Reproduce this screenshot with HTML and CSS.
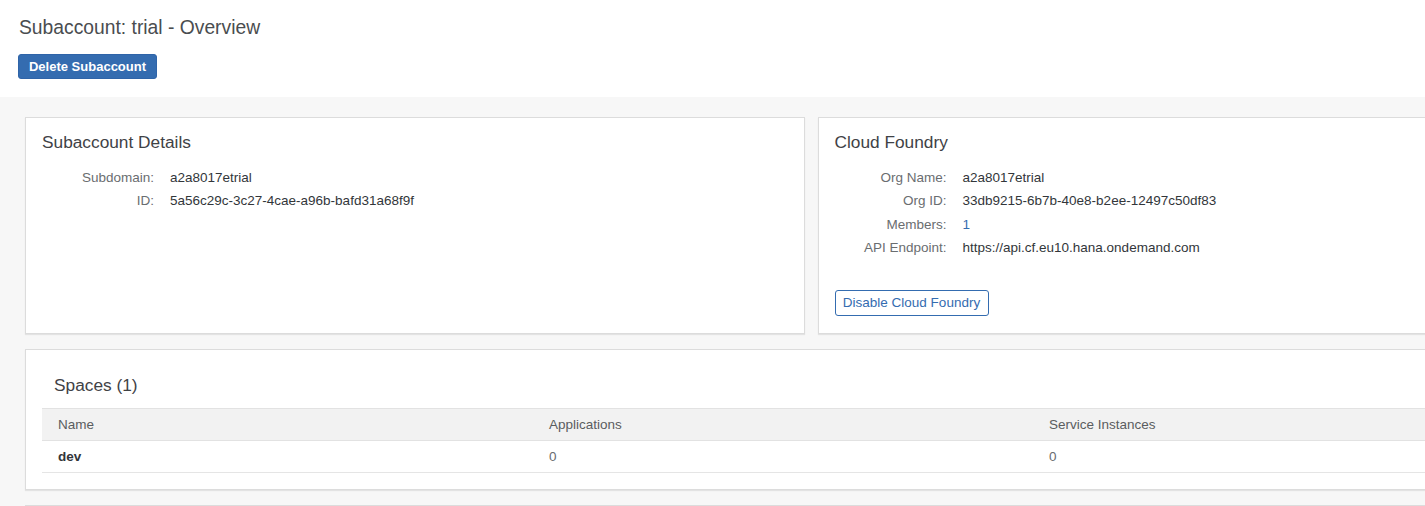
FILE: index.html
```html
<!DOCTYPE html>
<html>
<head>
<meta charset="utf-8">
<link rel="stylesheet" href="styles.css">
</head>
<body>
<div class="viewport">
<header class="page-header">
  <h1 class="page-title">Subaccount: trial - Overview</h1>
  <button class="btn-emph">Delete Subaccount</button>
</header>
<main class="content">
  <div class="row">
    <section class="card">
      <h2 class="card-title">Subaccount Details</h2>
      <dl class="form">
        <dt>Subdomain:</dt><dd>a2a8017etrial</dd>
        <dt>ID:</dt><dd>5a56c29c-3c27-4cae-a96b-bafd31a68f9f</dd>
      </dl>
    </section>
    <section class="card">
      <h2 class="card-title">Cloud Foundry</h2>
      <dl class="form">
        <dt>Org Name:</dt><dd>a2a8017etrial</dd>
        <dt>Org ID:</dt><dd>33db9215-6b7b-40e8-b2ee-12497c50df83</dd>
        <dt>Members:</dt><dd class="link">1</dd>
        <dt>API Endpoint:</dt><dd>https://api.cf.eu10.hana.ondemand.com</dd>
      </dl>
      <button class="btn-ghost">Disable Cloud Foundry</button>
    </section>
  </div>
  <section class="card spaces">
    <h2 class="spaces-title">Spaces (1)</h2>
    <div class="table">
      <div class="thead">
        <div class="cell">Name</div>
        <div class="cell">Applications</div>
        <div class="cell">Service Instances</div>
      </div>
      <div class="trow">
        <div class="cell strong">dev</div>
        <div class="cell num">0</div>
        <div class="cell num">0</div>
      </div>
    </div>
  </section>
  <section class="card next"></section>
</main>
</div>
</body>
</html>
```
FILE: styles.css
```css
html, body {
  margin: 0;
  padding: 0;
  background: #f7f7f7;
  overflow: hidden;
  font-family: "Liberation Sans", Arial, sans-serif;
  color: #32363a;
}
.viewport {
  width: 100vw;
  height: 100vh;
  overflow: hidden;
}
.page-header {
  background: #ffffff;
  height: 97px;
  box-sizing: border-box;
  padding: 16px 18px 0 18px;
}
.page-title {
  margin: 0 0 0 1px;
  font-size: 19.3px;
  font-weight: normal;
  line-height: 24px;
  color: #4a4d50;
}
.btn-emph {
  margin-top: 14px;
  height: 25px;
  width: 139px;
  padding: 0;
  border: 1px solid #2f64a8;
  border-radius: 3px;
  background: #346cb0;
  color: #ffffff;
  font-family: "Liberation Sans", Arial, sans-serif;
  font-weight: bold;
  font-size: 13px;
}
.content {
  padding: 20px 0 0 25px;
  width: 1572px;
  display: flex;
  flex-direction: column;
  gap: 15px;
}
.row {
  display: flex;
  gap: 13px;
}
.card {
  background: #ffffff;
  border: 1px solid #dcdcdc;
  box-shadow: 0 1px 1px rgba(0,0,0,0.08);
  box-sizing: border-box;
}
.row .card {
  width: 780px;
  height: 217px;
  padding: 12px 16px 0 16px;
}
.card-title {
  margin: 0;
  font-size: 17.3px;
  line-height: 24px;
  font-weight: normal;
  color: #3f4246;
}
.form {
  display: grid;
  grid-template-columns: 112px auto;
  column-gap: 16px;
  row-gap: 0;
  margin: 12px 0 0 0;
  font-size: 13.5px;
  line-height: 23.4px;
}
.form dt {
  text-align: right;
  color: #6a6d70;
}
.form dd {
  margin: 0;
  color: #32363a;
}
.form dd.link {
  color: #346cb0;
}
.btn-ghost {
  margin-top: 30px;
  height: 26px;
  width: 154px;
  padding: 0;
  background: #ffffff;
  border: 1px solid #346cb0;
  border-radius: 3px;
  color: #346cb0;
  font-family: "Liberation Sans", Arial, sans-serif;
  font-size: 13.5px;
}
.spaces {
  width: 1572px;
  padding: 23px 16px 16px 16px;
}
.spaces-title {
  margin: 0 0 0 12px;
  font-size: 17.3px;
  line-height: 24px;
  font-weight: normal;
  color: #3f4246;
}
.table {
  margin-top: 11px;
  font-size: 13.5px;
}
.thead, .trow {
  display: grid;
  grid-template-columns: 491px 500px 1fr;
  align-items: center;
}
.thead {
  height: 33px;
  box-sizing: border-box;
  background: #f2f2f2;
  border-top: 1px solid #e2e2e2;
  border-bottom: 1px solid #e2e2e2;
  color: #5a5d60;
}
.trow {
  height: 32px;
  box-sizing: border-box;
  border-bottom: 1px solid #e5e5e5;
}
.cell {
  padding-left: 16px;
}
.strong {
  font-weight: bold;
  color: #32363a;
}
.num {
  color: #6a6d70;
}
.next {
  height: 60px;
}
```
